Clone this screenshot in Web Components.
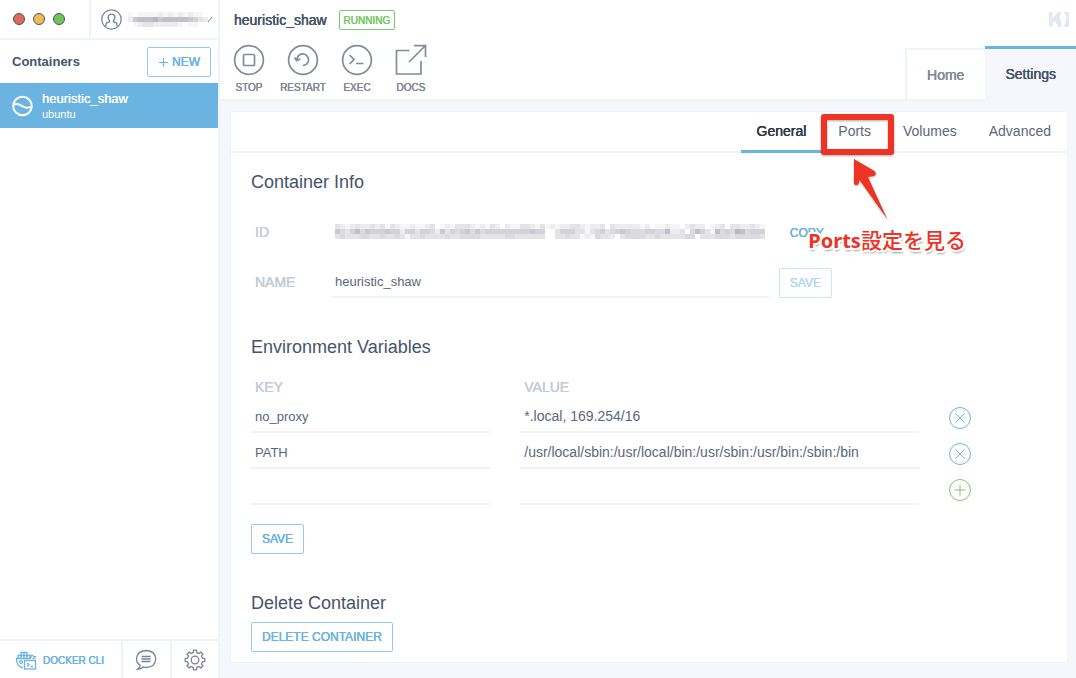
<!DOCTYPE html>
<html lang="en">
<head>
<meta charset="utf-8">
<meta name="viewport" content="width=device-width, initial-scale=1">
<title>Kitematic</title>
<style>
  :root {
    --blue: #6bb4e1;
    --blue-line: #93cbec;
    --green: #7cc86a;
    --ink: #46546a;
    --text: #5a6779;
    --grey: #838a98;
    --faint: #c6ccd9;
    --line: #eff4f9;
    --wash: #f5f7fc;
    --red: #ee3224;
    --medium: 0 0 0 currentColor, 0 0 0 currentColor;
  }
  body {
    margin: 0;
    font: 14px/20px "Liberation Sans", Arial, "Noto Sans CJK JP", sans-serif;
    color: var(--ink);
    background: #fff;
  }
</style>
</head>
<body>
<app-window></app-window>

<script>
const define = (name, html, setup) => {
  const template = document.createElement('template');
  template.innerHTML = '<style>*{box-sizing:border-box}:host{display:block;box-sizing:border-box}</style>' + html;
  customElements.define(name, class extends HTMLElement {
    constructor() {
      super();
      this.attachShadow({ mode: 'open' }).append(template.content.cloneNode(true));
    }
    connectedCallback() { if (setup) setup(this, this.shadowRoot); }
  });
};

/* Outlined push button */
define('outline-button', `
  <style>
    :host { display: inline-block; }
    button {
      display: flex; align-items: center; gap: 4px; height: 30px; padding: 0 10px;
      border: 1px solid var(--blue-line); border-radius: 2px; background: #fff;
      color: var(--blue); font: 12px/20px "Liberation Sans", Arial, sans-serif; white-space: nowrap; text-shadow: var(--medium);
    }
    :host([plain]) button { border-color: transparent; }
    :host([muted]) button { color: #b3daf2; border-color: #c9e5f6; }
  </style>
  <button type="button"><slot></slot></button>`,
  (el, root) => { root.querySelector('button').disabled = el.hasAttribute('muted'); });

/* Mosaic of 5px cells standing in for hidden text; each row is a string of darkness digits */
define('redacted-text', `
  <style>svg { display: block; }</style>
  <svg shape-rendering="crispEdges" role="img" aria-label="hidden"></svg>`,
  (el, root) => {
    const rows = el.getAttribute('rows').split('/');
    const svg = root.querySelector('svg');
    svg.setAttribute('width', rows[0].length * 5);
    svg.setAttribute('height', rows.length * 5);
    svg.innerHTML = rows.map((r, y) => [...r].map((d, x) =>
      `<rect x="${x * 5}" y="${y * 5}" width="5" height="5" fill="rgb(${255 - d * 9},${255 - d * 9},${255 - d * 8})"/>`).join('')).join('');
  });

define('container-item', `
  <style>
    a { display: flex; align-items: center; gap: 9px; height: 45px; padding: 0 12px; background: var(--blue); color: #fff; text-decoration: none; }
    svg { display: block; }
    span { display: block; }
    .name { font-size: 13px; line-height: 16px; text-shadow: 0 0 0 currentColor; }
    .image { font-size: 11px; line-height: 14px; }
  </style>
  <a href="#container">
    <svg width="21" height="22" viewBox="0 0 21 22" fill="none" stroke="#fff" stroke-width="2"><circle cx="10.500" cy="11" r="9.300"/><path d="M1.500 9.500C6 8 8.500 10 11 11.500S16 13.500 19.500 11.500"/></svg>
    <span><span class="name"><slot name="name"></slot></span><span class="image"><slot name="image"></slot></span></span>
  </a>`);

define('side-bar', `
  <style>
    :host { display: flex; flex-direction: column; width: 220px; flex: none; border-right: 2px solid var(--line); background: #fff; }
    .top { display: flex; height: 40px; border-bottom: 2px solid var(--line); }
    .lights { display: flex; align-items: center; gap: 8px; width: 91px; padding-left: 13px; border-right: 2px solid var(--line); }
    .lights i { width: 12px; height: 12px; border-radius: 50%; border: 1px solid; }
    .close { background: #e0695e; border-color: #cf5a50; }
    .min { background: #f0bb55; border-color: #dca845; }
    .max { background: #73c35b; border-color: #62b14b; }
    .user { display: flex; align-items: center; gap: 6px; flex: 1; padding: 0 0 0 10px; border: 0; background: none; }
    .user span { display: flex; align-items: center; }
    svg { display: block; }
    .head { display: flex; align-items: center; justify-content: space-between; height: 43px; padding: 0 7px 0 12px; }
    h2 { margin: 0; font-size: 13px; line-height: 20px; }
    .space { flex: 1; }
    .foot { display: flex; height: 39px; border-top: 2px solid var(--line); }
    .foot button { flex: 1; display: flex; align-items: center; justify-content: center; padding: 1px 0 0; border: 0; background: #fff; }
    .foot button + button { border-left: 2px solid var(--line); }
    .foot .cli { flex: none; width: 121px; gap: 6px; justify-content: flex-start; padding: 2px 0 0 15px; color: var(--blue); font: 10px/20px "Liberation Sans", Arial, sans-serif; text-shadow: var(--medium); }
  </style>
  <div class="top">
    <div class="lights"><i class="close"></i><i class="min"></i><i class="max"></i></div>
    <button class="user" type="button" aria-label="Account">
      <svg width="21" height="21" viewBox="0 0 21 21" fill="none" stroke="#7b8393" stroke-width="1.300"><circle cx="10.500" cy="10.500" r="9.700"/><path d="M5 17.500v-2q0-2 2.600-2.400l1-.4v-1Q7 10.300 7.100 8.500 7.200 5.200 10.500 5.200t3.400 3.300q.1 1.800-1.500 3.200v1l1 .4q2.600.4 2.600 2.400v2"/></svg>
      <span><redacted-text rows="1011112121212110/2677786777776532/0123322222101100"></redacted-text><svg width="5" height="7" viewBox="0 0 5 7" fill="none" stroke="#777f8e"><path d="M0 6 4 1"/></svg></span>
    </button>
  </div>
  <div class="head"><h2>Containers</h2>
    <outline-button><svg width="10" height="10" viewBox="0 0 10 10" stroke="#6bb4e1" stroke-width="1"><path d="M5.500 1v9M1 5.500h9"/></svg>NEW</outline-button>
  </div>
  <slot></slot>
  <div class="space"></div>
  <div class="foot">
    <button class="cli" type="button"><svg width="22" height="22" viewBox="0 0 22 22" fill="none" stroke="#6bb4e1" stroke-width="1.300"><path d="M8 17.500H7Q1.600 16.500 1.500 8.500H15q1.500-.5 1-3Q17.500 4.500 18.500 6.500l2 .2q-.5 2-3 2.300"/><path d="M3 8.500v-3h12v3M6 8.500v-6h6v6M9 2v6.500M6 5.500h6"/><circle cx="6" cy="12" r="1.400"/><rect x="9.500" y="10.500" width="11" height="8.500" fill="#fff"/><path d="m12 13 2 1.700-2 1.700M15.500 16.500H18"/></svg>DOCKER CLI</button>
    <button type="button" aria-label="Feedback"><svg width="22" height="22" viewBox="0 0 22 22" fill="none" stroke="#7b8393" stroke-width="1.300"><path d="M5.300 16.300Q1.500 14 1.500 10 2 2 11.200 1.500 20.500 2 20.700 10 20.300 18 11.200 18.500q-1.700 0-3-.4-2.500 2.300-5.700 2.200 2.300-1.300 2.800-4Z"/><path d="M6.500 7.500h9M6.500 10h9M6.500 12.500h9"/></svg></button>
    <button type="button" aria-label="Preferences"><svg id="gear" width="22" height="22" viewBox="0 0 22 22" fill="none" stroke="#7b8393" stroke-width="1.300" stroke-linejoin="round"><path/><circle cx="11" cy="11" r="3.800"/></svg></button>
  </div>`,
  (el, root) => {
    const p = [];
    for (let i = 0; i < 8; i++) {
      for (const [a, r] of [[-13, 7.600], [-9, 9.900], [9, 9.900], [13, 7.600]]) {
        const t = (i * 45 + a) * Math.PI / 180;
        p.push((11 + r * Math.sin(t)).toFixed(2) + ' ' + (11 - r * Math.cos(t)).toFixed(2));
      }
    }
    root.querySelector('#gear path').setAttribute('d', 'M' + p.join('L') + 'Z');
  });

define('action-button', `
  <style>
    :host { flex: none; width: 54px; }
    button { display: flex; flex-direction: column; align-items: center; gap: 2px; width: 100%; padding: 0; border: 0; background: none;
      color: var(--grey); font: 10px/20px "Liberation Sans", Arial, sans-serif; text-shadow: var(--medium); }
  </style>
  <button type="button"><slot name="icon"></slot><slot></slot></button>`);

define('app-header', `
  <style>
    :host { display: flex; justify-content: space-between; align-items: flex-end; height: 101px; border-bottom: 2px solid var(--line); background: #fff; position: relative; }
    .left { align-self: flex-start; }
    .title { display: flex; align-items: center; gap: 12px; height: 40px; padding-left: 14px; }
    h1 { margin: 0; font-size: 14px; font-weight: normal; line-height: 20px; text-shadow: var(--medium); }
    .state { height: 20px; padding: 0 4px; border: 1px solid var(--green); border-radius: 2px; color: var(--green); font-size: 10px; line-height: 19px; text-shadow: var(--medium); }
    .actions { display: flex; padding: 4px 0 0 2px; }
    svg { display: block; }
    .logo { position: absolute; top: 11px; right: 6px; }
    nav { display: flex; align-items: flex-end; margin-bottom: -2px; }
    nav a { height: 53px; padding: 0 21px 0 20px; line-height: 50px; color: var(--grey); text-decoration: none; border: 2px solid var(--line); border-right: 0; text-shadow: var(--medium); }
    nav a.on { height: 55px; padding: 0 20px; border: 0; border-top: 3px solid var(--blue); background: var(--wash); color: var(--ink); line-height: 51px; }
  </style>
  <div class="left">
    <div class="title"><h1>heuristic_shaw</h1><span class="state">RUNNING</span></div>
    <div class="actions">
      <action-button><svg slot="icon" width="32" height="32" viewBox="0 0 32 32" fill="none" stroke="#838a98" stroke-width="1.700"><circle cx="16" cy="16" r="14.400"/><rect x="10.500" y="10.500" width="11" height="11" rx="1"/></svg>STOP</action-button>
      <action-button><svg slot="icon" width="32" height="32" viewBox="0 0 32 32" fill="none" stroke="#838a98" stroke-width="1.700"><circle cx="16" cy="16" r="14.400"/><path d="M10 16.500a5.800 5.800 0 1 1 5.800 5"/><path d="m7.500 13.500 2.300 3.200 3.500-2"/></svg>RESTART</action-button>
      <action-button><svg slot="icon" width="32" height="32" viewBox="0 0 32 32" fill="none" stroke="#838a98" stroke-width="1.700"><circle cx="16" cy="16" r="14.400"/><path d="m8.500 11 4.500 4.500L8.500 20M15 19.500h7.500"/></svg>EXEC</action-button>
      <action-button><svg slot="icon" width="32" height="32" viewBox="0 0 32 32" fill="none" stroke="#838a98" stroke-width="1.700"><path d="M14.500 6.500H1.500v23.500h24.500V17M14 18 30.500 1.500M19 1.700h11.500V13"/></svg>DOCS</action-button>
    </div>
  </div>
  <nav><a href="#home">Home</a><a class="on" href="#settings">Settings</a></nav>
  <svg class="logo" width="22" height="17" viewBox="0 0 22 17" fill="#e4e9ef" role="img" aria-label="Kitematic"><path d="M1 1h3.500v6.500L9.500 1h4l-1.700 4L14 16h-3.500L6.800 9.500 4.500 12v4H1zM16 1h5v15h-5l2.500-9.500z"/></svg>`);

/* Red frame, arrow and caption drawn over the tab that hosts it */
define('callout-note', `
  <style>
    :host { position: absolute; top: 0; left: 0; z-index: 1; pointer-events: none; }
    .frame { position: absolute; top: 2px; left: -1px; width: 73px; height: 41px; border: 6px solid var(--red); border-radius: 3px; filter: drop-shadow(0 1px 1px #0005); }
    svg { position: absolute; top: 46px; left: 30px; filter: drop-shadow(0 1px 1px #0004); }
    p { position: absolute; top: 112px; left: -14px; margin: 0; white-space: nowrap; color: var(--red);
      font: 500 21px/30px "Noto Sans CJK JP", sans-serif;
      text-shadow: -2px -1px #fff, -2px 1px #fff, 2px -1px #fff, 2px 1px #fff, -1px -2px #fff, 1px -2px #fff, -1px 2px #fff, 1px 2px #fff, 1px 3px 2px #999; }
    b { font: bold 20px/30px "Noto Sans", "Open Sans", sans-serif; }
  </style>
  <div class="frame"></div>
  <svg width="40" height="66" viewBox="0 0 40 66"><path d="M2 1 22.500 13Q25.500 16 22 18L16 19 35.500 61.500 7.500 22 6.500 26Q4.500 28.500 2 26Z" fill="#ee3224"/></svg>
  <p><b>Ports</b><slot></slot></p>`);

define('settings-tabs', `
  <style>
    nav { display: flex; justify-content: flex-end; height: 41px; border-bottom: 2px solid var(--line); }
    .tab { position: relative; }
    a { display: block; height: 41px; padding: 0 16px; line-height: 39px; color: var(--text); text-decoration: none; }
    .tab.on a { color: #303a45; border-bottom: 3px solid var(--blue); text-shadow: var(--medium); }
  </style>
  <nav>
    <div class="tab on"><a href="#general">General</a></div>
    <div class="tab"><a href="#ports">Ports</a><callout-note>設定を見る</callout-note></div>
    <div class="tab"><a href="#volumes">Volumes</a></div>
    <div class="tab"><a href="#advanced">Advanced</a></div>
  </nav>`);

define('settings-section', `
  <style>
    h3 { margin: 0 0 18px; font-size: 18px; font-weight: normal; line-height: 24px; }
    :host([tight]) h3 { margin-bottom: 7px; }
  </style>
  <h3><slot name="heading"></slot></h3><slot></slot>`);

const fieldStyles = `
    input { display: block; width: 100%; height: 36px; padding: 4px 4px 0; border: 0; border-bottom: 2px solid var(--line); border-radius: 0; outline: 0; background: none;
      color: var(--text); font: 13px/20px "Liberation Sans", Arial, sans-serif; }
    label, th { color: var(--faint); font-size: 14px; font-weight: normal; line-height: 20px; text-align: left; text-shadow: var(--medium); }`;

define('container-info', `
  <style>${fieldStyles}
    .row { display: grid; grid-template-columns: 80px 55% 1fr; align-items: center; height: 36px; margin-bottom: 14px; }
    .row:last-child { margin-bottom: 0; }
    label { padding: 3px 0 0 4px; }
    output { display: block; overflow: hidden; padding: 2px 4px 0; }
    outline-button { padding: 6px 0 0 10px; }
  </style>
  <div class="row"><label for="cid">ID</label><output id="cid"><redacted-text rows="32123223231321121123012133321213202113321312122332122303222221201121102322012303322321/64357465556552553554263545646455555555565500355533134534565444554472230475317454874555/34333443343343133433334334444333334433333300334331214332034444334333334403334443444443"></redacted-text></output><outline-button plain>COPY</outline-button></div>
  <div class="row"><label for="name">NAME</label><input id="name" value="heuristic_shaw"><outline-button muted>SAVE</outline-button></div>`);

define('env-table', `
  <style>${fieldStyles}
    table, thead, tbody { display: block; }
    tr { display: grid; grid-template-columns: 3fr 5fr 98px; column-gap: 30px; align-items: center; }
    td, th { padding: 0; }
    th { padding-left: 4px; }
    .value input { font-size: 14px; }
    td button { display: block; margin-top: 5px; padding: 0; border: 0; background: none; }
    svg { display: block; fill: none; stroke: var(--blue); }
    .add svg { stroke: var(--green); }
    outline-button { margin-top: 19px; }
  </style>
  <table>
    <thead><tr><th id="k" scope="col">KEY</th><th id="v" scope="col">VALUE</th></tr></thead>
    <tbody></tbody>
  </table>
  <outline-button>SAVE</outline-button>`,
  (el, root) => {
    const vars = [['no_proxy', '*.local, 169.254/16'], ['PATH', '/usr/local/sbin:/usr/local/bin:/usr/sbin:/usr/bin:/sbin:/bin'], ['', '']];
    root.querySelector('tbody').innerHTML = vars.map(([k, v]) => `<tr>
      <td><input aria-labelledby="k" value="${k}"></td><td class="value"><input aria-labelledby="v" value="${v}"></td>
      <td><button type="button" class="${k ? 'remove' : 'add'}" aria-label="${k ? 'Remove' : 'Add'}"><svg width="22" height="22" viewBox="0 0 22 22"><circle cx="11" cy="11" r="10.500"/><path d="${k ? 'm6.500 6.500 9 9m0-9-9 9' : 'M11 5.500v11M5.500 11h11'}"/></svg></button></td></tr>`).join('');
  });

define('app-window', `
  <style>
    :host { display: flex; min-height: 100vh; }
    main { flex: 1; min-width: 0; display: flex; flex-direction: column; background: var(--wash); }
    .panel { flex: 1; margin: 10px 8px 15px 10px; border: 1px solid var(--line); border-radius: 2px; background: #fff; }
    .body { display: flex; flex-direction: column; gap: 37px; padding: 17px 20px 10px; }
  </style>
  <side-bar><container-item><span slot="name">heuristic_shaw</span><span slot="image">ubuntu</span></container-item></side-bar>
  <main>
    <app-header></app-header>
    <div class="panel">
      <settings-tabs></settings-tabs>
      <div class="body">
        <settings-section><span slot="heading">Container Info</span><container-info></container-info></settings-section>
        <settings-section><span slot="heading">Environment Variables</span><env-table></env-table></settings-section>
        <settings-section tight><span slot="heading">Delete Container</span><outline-button>DELETE CONTAINER</outline-button></settings-section>
      </div>
    </div>
  </main>`);
</script>
</body>
</html>
